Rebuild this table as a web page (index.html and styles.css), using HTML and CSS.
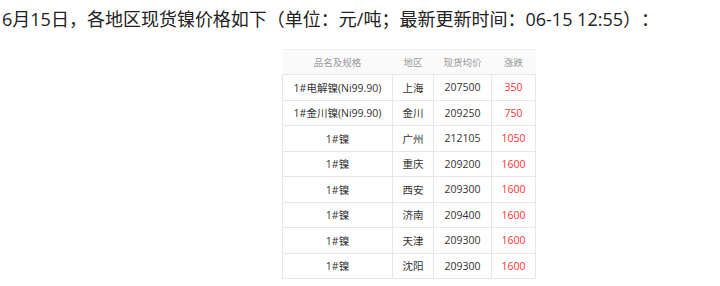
FILE: index.html
```html
<!DOCTYPE html>
<html lang="zh-CN">
<head>
    <meta charset="UTF-8">
    <title>现货镍价格</title>
    <link rel="stylesheet" href="styles.css">
</head>
<body>
    <p class="summary">6月15日，各地区现货镍价格如下（单位：元/吨；最新更新时间：06-15 12:55）：</p>

    <table class="price-table">
        <thead>
            <tr>
                <th class="col-name">品名及规格</th>
                <th class="col-area">地区</th>
                <th class="col-price">现货均价</th>
                <th class="col-change">涨跌</th>
            </tr>
        </thead>
        <tbody>
            <tr><td>1#电解镍(Ni99.90)</td><td>上海</td><td>207500</td><td class="up">350</td></tr>
            <tr><td>1#金川镍(Ni99.90)</td><td>金川</td><td>209250</td><td class="up">750</td></tr>
            <tr><td>1#镍</td><td>广州</td><td>212105</td><td class="up">1050</td></tr>
            <tr><td>1#镍</td><td>重庆</td><td>209200</td><td class="up">1600</td></tr>
            <tr><td>1#镍</td><td>西安</td><td>209300</td><td class="up">1600</td></tr>
            <tr><td>1#镍</td><td>济南</td><td>209400</td><td class="up">1600</td></tr>
            <tr><td>1#镍</td><td>天津</td><td>209300</td><td class="up">1600</td></tr>
            <tr><td>1#镍</td><td>沈阳</td><td>209300</td><td class="up">1600</td></tr>
        </tbody>
    </table>
</body>
</html>
```

FILE: styles.css
```css
body {
    margin: 0;
    padding: 0 0 0 2px;
    font-family: "Open Sans", "Noto Sans CJK SC", sans-serif;
    color: #333;
    background-color: #fff;
}

.summary {
    margin: 0;
    padding-top: 8px;
    font-size: 18px;
    line-height: 22px;
    color: #222;
    text-spacing-trim: space-all;
}

.price-table {
    width: 253px;
    margin: 19px 0 0 280px;
    border-collapse: collapse;
    table-layout: fixed;
    font-size: 10.5px;
    text-align: center;
}

.price-table th {
    height: 24px;
    padding: 0;
    font-size: 9.5px;
    font-weight: normal;
    color: #999;
    background-color: #fafafa;
    border-top: 1px solid #eee;
}

.price-table td {
    height: 24.5px;
    padding: 0;
    border: 1px solid #e6e6e6;
    color: #333;
}

.col-name { width: 110px; }
.col-area { width: 41px; }
.col-price { width: 58px; }
.col-change { width: 44px; }

.price-table td.up {
    color: #ff3333;
}
```
